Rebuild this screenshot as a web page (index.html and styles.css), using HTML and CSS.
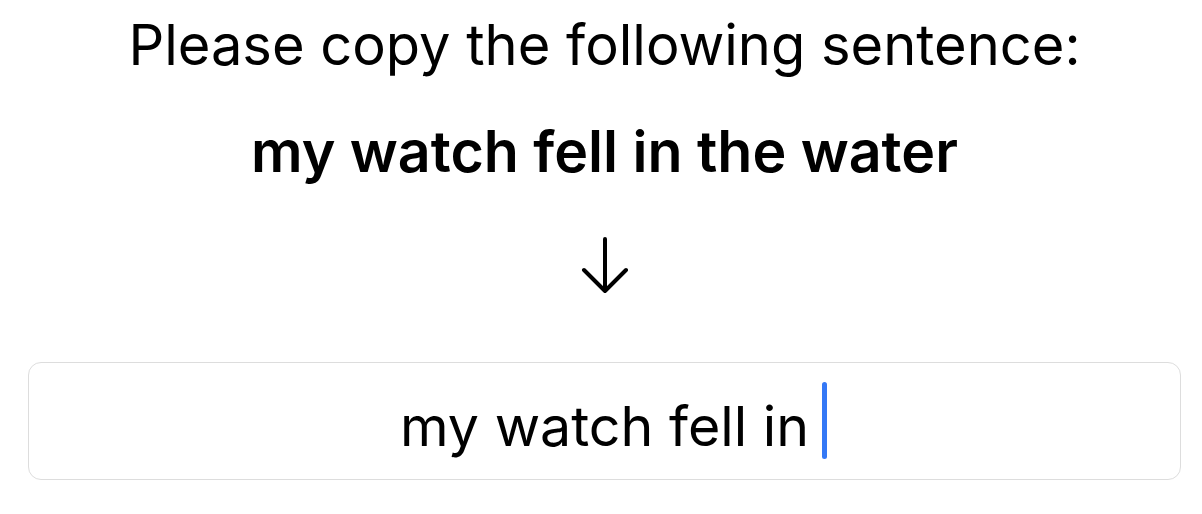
FILE: index.html
```html
<!DOCTYPE html>
<html>
<head>
    <title>Copy Sentence</title>
    <link rel="stylesheet" href="styles.css">
</head>
<body>

<div class="task">
    <p class="prompt">Please copy the following sentence:</p>
    <p class="target">my watch fell in the water</p>
    <div class="arrow">
        <svg width="48" height="58" viewBox="0 0 48 58">
            <path d="M24 3 V55 M3 34 L24 55 L45 34" fill="none" stroke="#000" stroke-width="4" stroke-linecap="round" stroke-linejoin="round"/>
        </svg>
    </div>
    <div class="entry">
        <span class="typed">my watch fell in<span class="caret"></span></span>
    </div>
</div>

</body>
</html>
```

FILE: styles.css
```css
body {
    margin: 0;
    background: #fff;
    font-family: Inter, "Noto Sans", sans-serif;
    color: #000;
}
.task {
    display: flex;
    flex-direction: column;
    align-items: center;
    padding: 11px 21px 0 28px;
}
.prompt {
    margin: 0;
    font-size: 56px;
    line-height: 68px;
}
.target {
    margin: 38px 0 0;
    font-size: 57.3px;
    font-weight: 600;
    line-height: 68px;
}
.arrow {
    margin-top: 51px;
    height: 58px;
}
.arrow svg {
    display: block;
}
.entry {
    margin-top: 68px;
    width: 100%;
    box-sizing: border-box;
    height: 118px;
    border: 1.5px solid #ddd;
    border-radius: 13px;
    display: flex;
    align-items: center;
    justify-content: center;
}
.typed {
    position: relative;
    font-size: 55.5px;
    padding-top: 8px;
}
.caret {
    position: absolute;
    left: 100%;
    top: -2px;
    width: 5px;
    height: 77px;
    margin-left: 13px;
    background: #3478f6;
    border-radius: 3px;
}
```
